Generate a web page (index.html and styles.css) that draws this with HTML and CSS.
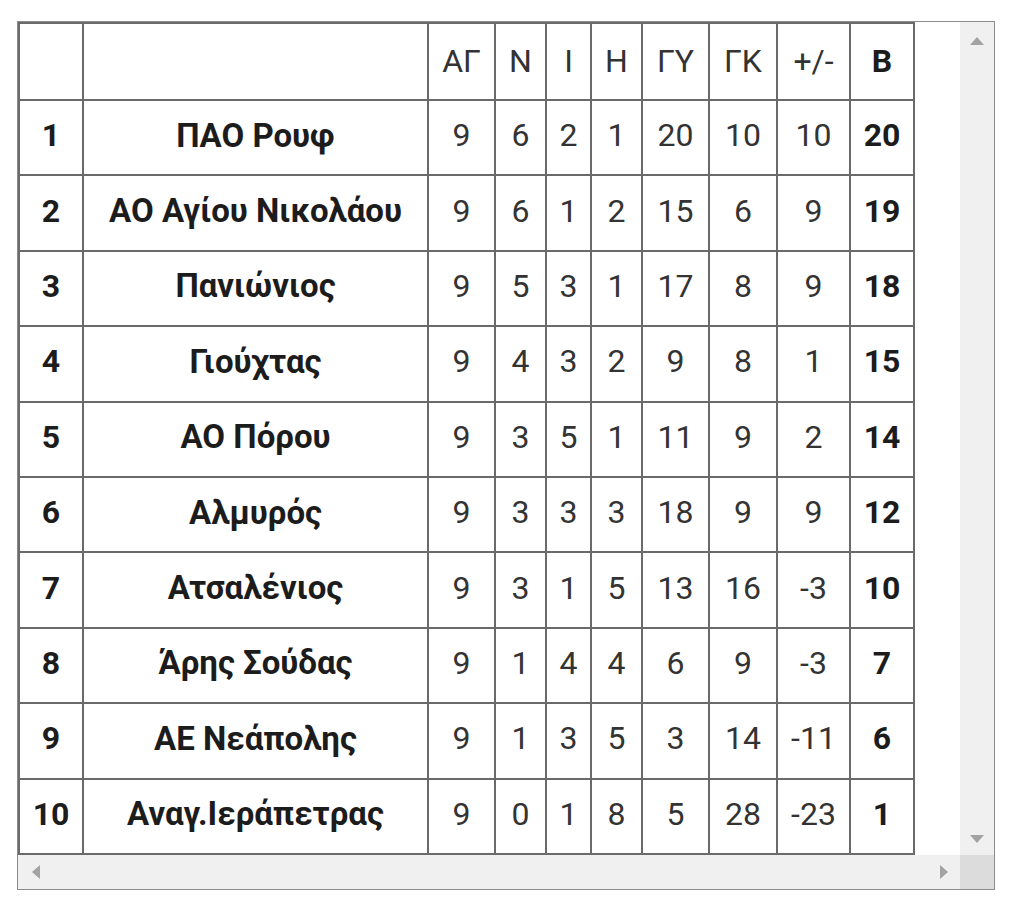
FILE: index.html
```html
<!DOCTYPE html>
<html lang="el">
<head>
<meta charset="utf-8">
<title>Βαθμολογία</title>
<link rel="stylesheet" href="styles.css">
</head>
<body>
<div class="frame">
  <div class="viewport">
    <table class="standings">
      <thead>
        <tr class="head">
          <th class="c-rank"></th>
          <th class="c-team"></th>
          <th class="c-ag">ΑΓ</th>
          <th class="c-n">Ν</th>
          <th class="c-i">Ι</th>
          <th class="c-h">Η</th>
          <th class="c-gy">ΓΥ</th>
          <th class="c-gk">ΓΚ</th>
          <th class="c-diff">+/-</th>
          <th class="c-pts strong">Β</th>
        </tr>
      </thead>
      <tbody>
        <tr><td class="strong">1</td><td class="strong team">ΠΑΟ Ρουφ</td><td>9</td><td>6</td><td>2</td><td>1</td><td>20</td><td>10</td><td>10</td><td class="strong">20</td></tr>
        <tr><td class="strong">2</td><td class="strong team">ΑΟ Αγίου Νικολάου</td><td>9</td><td>6</td><td>1</td><td>2</td><td>15</td><td>6</td><td>9</td><td class="strong">19</td></tr>
        <tr><td class="strong">3</td><td class="strong team">Πανιώνιος</td><td>9</td><td>5</td><td>3</td><td>1</td><td>17</td><td>8</td><td>9</td><td class="strong">18</td></tr>
        <tr><td class="strong">4</td><td class="strong team">Γιούχτας</td><td>9</td><td>4</td><td>3</td><td>2</td><td>9</td><td>8</td><td>1</td><td class="strong">15</td></tr>
        <tr><td class="strong">5</td><td class="strong team">ΑΟ Πόρου</td><td>9</td><td>3</td><td>5</td><td>1</td><td>11</td><td>9</td><td>2</td><td class="strong">14</td></tr>
        <tr><td class="strong">6</td><td class="strong team">Αλμυρός</td><td>9</td><td>3</td><td>3</td><td>3</td><td>18</td><td>9</td><td>9</td><td class="strong">12</td></tr>
        <tr><td class="strong">7</td><td class="strong team">Ατσαλένιος</td><td>9</td><td>3</td><td>1</td><td>5</td><td>13</td><td>16</td><td>-3</td><td class="strong">10</td></tr>
        <tr><td class="strong">8</td><td class="strong team">Άρης Σούδας</td><td>9</td><td>1</td><td>4</td><td>4</td><td>6</td><td>9</td><td>-3</td><td class="strong">7</td></tr>
        <tr><td class="strong">9</td><td class="strong team">ΑΕ Νεάπολης</td><td>9</td><td>1</td><td>3</td><td>5</td><td>3</td><td>14</td><td>-11</td><td class="strong">6</td></tr>
        <tr><td class="strong">10</td><td class="strong team">Αναγ.Ιεράπετρας</td><td>9</td><td>0</td><td>1</td><td>8</td><td>5</td><td>28</td><td>-23</td><td class="strong">1</td></tr>
      </tbody>
    </table>
  </div>
  <div class="vscroll">
    <span class="arrow arrow-up"></span>
    <span class="arrow arrow-down"></span>
  </div>
  <div class="hscroll">
    <span class="arrow arrow-left"></span>
    <span class="arrow arrow-right"></span>
  </div>
  <div class="corner"></div>
</div>
</body>
</html>
```

FILE: styles.css
```css
html, body {
  margin: 0;
  padding: 0;
  background: #ffffff;
}

body {
  padding: 21px 0 0 17px;
  font-family: Roboto, "Noto Sans", "DejaVu Sans", sans-serif;
}

.frame {
  width: 976px;
  height: 867px;
  border: 1px solid #8c8c8c;
  display: grid;
  grid-template-columns: 942px 34px;
  grid-template-rows: 833px 34px;
  background: #ffffff;
}

.viewport {
  overflow: hidden;
  background: #ffffff;
}

.standings {
  border-collapse: separate;
  border-spacing: 0;
  table-layout: fixed;
  width: 897px;
  border-top: 2px solid #6a6a6a;
  border-left: 2px solid #6a6a6a;
  color: #333333;
  font-size: 32px;
}

.standings th,
.standings td {
  box-sizing: border-box;
  border-right: 2px solid #6a6a6a;
  border-bottom: 2px solid #6a6a6a;
  padding: 0;
  text-align: center;
  vertical-align: middle;
  font-weight: 400;
}

.standings .head th {
  height: 77px;
  padding-bottom: 2px;
}

.standings tbody tr {
  height: 75.4px;
}

.standings tbody td {
  padding-bottom: 5px;
}

.standings .strong {
  font-weight: 700;
  color: #1c1c1c;
}

.standings .team {
  font-size: 33px;
}

.c-rank { width: 64px; }
.c-team { width: 345px; }
.c-ag { width: 67px; }
.c-n { width: 51px; }
.c-i { width: 45px; }
.c-h { width: 51px; }
.c-gy { width: 67px; }
.c-gk { width: 68px; }
.c-diff { width: 73px; }
.c-pts { width: 64px; }

.vscroll {
  background: #f0f0f0;
  display: flex;
  flex-direction: column;
  justify-content: space-between;
  align-items: center;
  padding: 15px 0 12px;
  box-sizing: border-box;
}

.hscroll {
  background: #f0f0f0;
  display: flex;
  justify-content: space-between;
  align-items: center;
  padding: 0 12px 0 14px;
  box-sizing: border-box;
}

.corner {
  background: #dcdcdc;
}

.arrow {
  display: block;
  width: 0;
  height: 0;
  border-style: solid;
  border-color: transparent;
}

.arrow-up {
  border-width: 0 7.5px 8px 7.5px;
  border-bottom-color: #a3a3a3;
}

.arrow-down {
  border-width: 8px 7.5px 0 7.5px;
  border-top-color: #a3a3a3;
}

.arrow-left {
  border-width: 7.5px 8px 7.5px 0;
  border-right-color: #a3a3a3;
}

.arrow-right {
  border-width: 7.5px 0 7.5px 8px;
  border-left-color: #a3a3a3;
}
```
